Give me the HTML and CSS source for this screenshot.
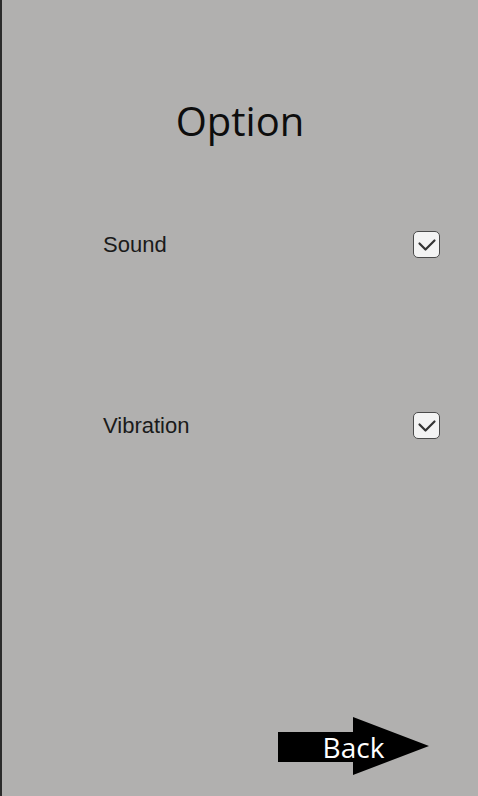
FILE: index.html
```html
<!DOCTYPE html>
<html>
<head>
<meta charset="utf-8">
<link rel="stylesheet" href="styles.css">
</head>
<body>
<div class="screen">
  <h1 class="title">Option</h1>
  <div class="row row-sound">
    <span class="label">Sound</span>
    <span class="check">
      <svg width="27" height="27" viewBox="0 0 27 27"><path d="M6.5 12.5 L12.5 18.5 L21.5 9.5" fill="none" stroke="#333" stroke-width="2.2" stroke-linecap="round" stroke-linejoin="round"/></svg>
    </span>
  </div>
  <div class="row row-vibration">
    <span class="label">Vibration</span>
    <span class="check">
      <svg width="27" height="27" viewBox="0 0 27 27"><path d="M6.5 12.5 L12.5 18.5 L21.5 9.5" fill="none" stroke="#333" stroke-width="2.2" stroke-linecap="round" stroke-linejoin="round"/></svg>
    </span>
  </div>
  <div class="spacer"></div>
  <div class="back">
    <svg class="arrow" width="151" height="58" viewBox="0 0 151 58"><path d="M0 15 H75 V0 L151 29 L75 58 V45 H0 Z" fill="#000"/></svg>
    <span class="back-text">Back</span>
  </div>
</div>
</body>
</html>
```
FILE: styles.css
```css
html, body {
  margin: 0;
  padding: 0;
}
body {
  background: #b1b0af;
}
.screen {
  height: 796px;
  box-sizing: border-box;
  border-left: 2px solid #2b2b2b;
  display: flex;
  flex-direction: column;
  background: #b1b0af;
}
.title {
  margin: 99px 0 0 0;
  font-family: "Open Sans", sans-serif;
  font-weight: 400;
  font-size: 40px;
  line-height: 44px;
  color: #0d0d0d;
  text-align: center;
}
.row {
  display: flex;
  align-items: center;
  justify-content: space-between;
  height: 28px;
  padding: 0 38px 0 101px;
}
.row-sound {
  margin-top: 87px;
}
.row-vibration {
  margin-top: 153px;
}
.label {
  font-family: "Liberation Sans", Arial, sans-serif;
  font-size: 22px;
  color: #1a1a1a;
  margin-top: 1px;
}
.check {
  width: 27px;
  height: 27px;
  box-sizing: border-box;
  border: 1.5px solid #4a4a4a;
  border-radius: 5px;
  background: #f3f3f3;
  display: grid;
  place-items: center;
}
.check svg {
  margin: -1.5px;
}
.spacer {
  flex: 1;
}
.back {
  display: grid;
  align-self: flex-start;
  margin: 0 0 21px 276px;
  width: 151px;
  height: 58px;
}
.arrow, .back-text {
  grid-area: 1 / 1;
}
.back-text {
  align-self: center;
  justify-self: center;
  font-family: "Open Sans", sans-serif;
  font-size: 28px;
  line-height: 1;
  color: #fff;
  margin-top: 2px;
}
```
